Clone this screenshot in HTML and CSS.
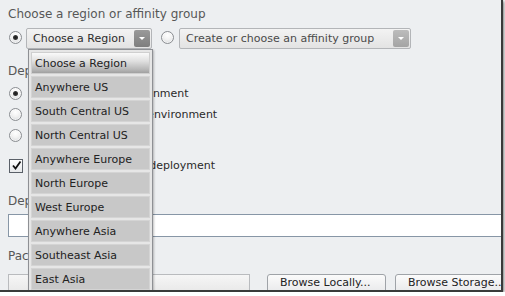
FILE: index.html
```html
<!DOCTYPE html>
<html>
<head>
<meta charset="utf-8">
<link rel="stylesheet" href="styles.css">
</head>
<body>
<div class="window">
  <div class="title">Choose a region or affinity group</div>
  <div class="choice-row">
    <span class="radio checked"></span>
    <div class="select sel-region"><span class="sel-text">Choose a Region</span><span class="sel-btn"><span class="arrow"></span></span></div>
    <span class="radio radio2"></span>
    <div class="select sel-affinity"><span class="sel-text">Create or choose an affinity group</span><span class="sel-btn"><span class="arrow"></span></span></div>
  </div>
  <div class="label sec-label">Deployment options</div>
  <div class="options">
    <div class="opt"><span class="radio checked"></span><span class="opt-text">Deploy to stage environment</span></div>
    <div class="opt"><span class="radio"></span><span class="opt-text">Deploy to production environment</span></div>
    <div class="opt"><span class="radio"></span><span class="opt-text">Do not deploy</span></div>
  </div>
  <div class="opt check-row"><span class="checkbox"><svg width="11" height="11" viewBox="0 0 11 11"><path d="M2 5.5 L4.5 8.5 L9.5 1.5" fill="none" stroke="#111" stroke-width="1.8"/></svg></span><span class="opt-text">Start after successful deployment</span></div>
  <div class="label name-label">Deployment name</div>
  <div class="text-input"></div>
  <div class="label pkg-label">Package location</div>
  <div class="pkg-row">
    <div class="pkg-input"></div>
    <span class="btn btn-local">Browse Locally...</span>
    <span class="btn btn-storage">Browse Storage...</span>
  </div>
  <ul class="dropdown">
    <li class="item selected">Choose a Region</li>
    <li class="item">Anywhere US</li>
    <li class="item">South Central US</li>
    <li class="item">North Central US</li>
    <li class="item">Anywhere Europe</li>
    <li class="item">North Europe</li>
    <li class="item">West Europe</li>
    <li class="item">Anywhere Asia</li>
    <li class="item">Southeast Asia</li>
    <li class="item">East Asia</li>
  </ul>
</div>
</body>
</html>
```
FILE: styles.css
```css
html, body {
  margin: 0;
  padding: 0;
  background: #ffffff;
}
body {
  font-family: "DejaVu Sans", Verdana, sans-serif;
  font-size: 11px;
  color: #2a2a2a;
}
.window {
  position: relative;
  width: 493px;
  height: 283px;
  padding: 7px 0 0 8px;
  background: #edeff1;
  border-right: 2px solid #3a3a3a;
  border-bottom: 2px solid #3a3a3a;
  box-shadow: 1px 1px 3px rgba(0,0,0,0.55);
  overflow: hidden;
}
.title, .label {
  font-size: 12px;
  line-height: 15px;
  color: #575757;
}
.choice-row {
  display: flex;
  align-items: center;
  margin-top: 6px;
  height: 21px;
}
.radio {
  position: relative;
  flex: none;
  width: 11px;
  height: 11px;
  margin-left: 1px;
  border-radius: 50%;
  border: 1px solid #8a8d91;
  background: radial-gradient(circle at 50% 30%, #ffffff 0%, #f2f2f2 45%, #cfd2d5 100%);
  box-shadow: inset 0 0 0 1px rgba(255,255,255,0.6);
}
.radio.checked::after {
  content: "";
  position: absolute;
  left: 3px;
  top: 3px;
  width: 5px;
  height: 5px;
  border-radius: 50%;
  background: radial-gradient(circle, #1a1a1a 0%, #333 60%, #777 100%);
}
.choice-row .radio { margin-top: -3px; }
.radio2 { margin-left: 9px; }
.select {
  display: flex;
  align-items: center;
  flex: none;
  box-sizing: border-box;
  height: 21px;
  border: 1px solid #b3b5b8;
  border-radius: 2px;
  background: linear-gradient(#f3f3f3, #e3e3e3);
  margin-left: 4px;
}
.sel-region { width: 126px; }
.sel-affinity { width: 232px; margin-left: 5px; }
.sel-text {
  flex: 1;
  padding-left: 6px;
  line-height: 19px;
  white-space: nowrap;
  overflow: hidden;
  color: #2c2c2c;
}
.sel-affinity .sel-text { color: #4a4a4a; }
.sel-btn {
  display: flex;
  align-items: center;
  justify-content: center;
  flex: none;
  width: 16px;
  height: 17px;
  margin-right: 1px;
  border-radius: 2px;
  background: linear-gradient(#9a9a9a, #7e7e7e);
}
.sel-affinity .sel-btn {
  background: linear-gradient(#bcbcbc, #a4a4a4);
}
.arrow {
  width: 0;
  height: 0;
  border-left: 3px solid transparent;
  border-right: 3px solid transparent;
  border-top: 3px solid #ffffff;
}
.sec-label { margin-top: 15px; }
.options { margin-top: 4px; }
.opt {
  display: flex;
  align-items: center;
  height: 21px;
  line-height: 21px;
  white-space: nowrap;
  color: #2a2a2a;
}
.opt-text { margin-left: 6px; }
.check-row { margin-top: 9px; }
.checkbox {
  display: flex;
  align-items: center;
  justify-content: center;
  flex: none;
  box-sizing: border-box;
  width: 14px;
  height: 14px;
  margin-left: 1px;
  border: 1px solid #5a6068;
  background: linear-gradient(#ffffff, #e6e8ea);
}
.name-label { margin-top: 18px; }
.text-input {
  box-sizing: border-box;
  margin-top: 5px;
  width: 510px;
  height: 23px;
  border: 1px solid #8796a6;
  background: #ffffff;
}
.pkg-label { margin-top: 12px; }
.pkg-row {
  display: flex;
  margin-top: 10px;
  width: 520px;
}
.pkg-input {
  flex: none;
  box-sizing: border-box;
  width: 242px;
  height: 24px;
  border: 1px solid #b9bbbe;
  background: linear-gradient(#f6f6f6, #e4e4e4);
}
.btn {
  flex: none;
  box-sizing: border-box;
  width: 119px;
  height: 24px;
  padding: 0 0 0 12px;
  line-height: 16px;
  border: 1px solid #9fa3a8;
  border-radius: 3px;
  background: linear-gradient(#fbfbfb, #e3e4e6);
  white-space: nowrap;
  color: #222;
}
.btn-local { margin-left: 17px; }
.btn-storage { margin-left: 9px; }
.dropdown {
  position: absolute;
  left: 28px;
  top: 49px;
  width: 125px;
  box-sizing: border-box;
  margin: 0;
  padding: 2px 2px 0 2px;
  list-style: none;
  border: 1px solid #8e9094;
  background: #e6e6e6;
  box-shadow: 1px 1px 2px rgba(0,0,0,0.25);
}
.item {
  box-sizing: border-box;
  height: 22px;
  margin-bottom: 2px;
  padding-left: 3px;
  line-height: 21px;
  background: #c8c8c8;
  border: 1px solid #d4d4d4;
  color: #222;
  white-space: nowrap;
}
.item.selected {
  background: linear-gradient(#fafafa 0%, #e0e0e0 40%, #b4b4b4 85%, #a0a0a0 100%);
  border-color: #cfcfcf;
}
```
